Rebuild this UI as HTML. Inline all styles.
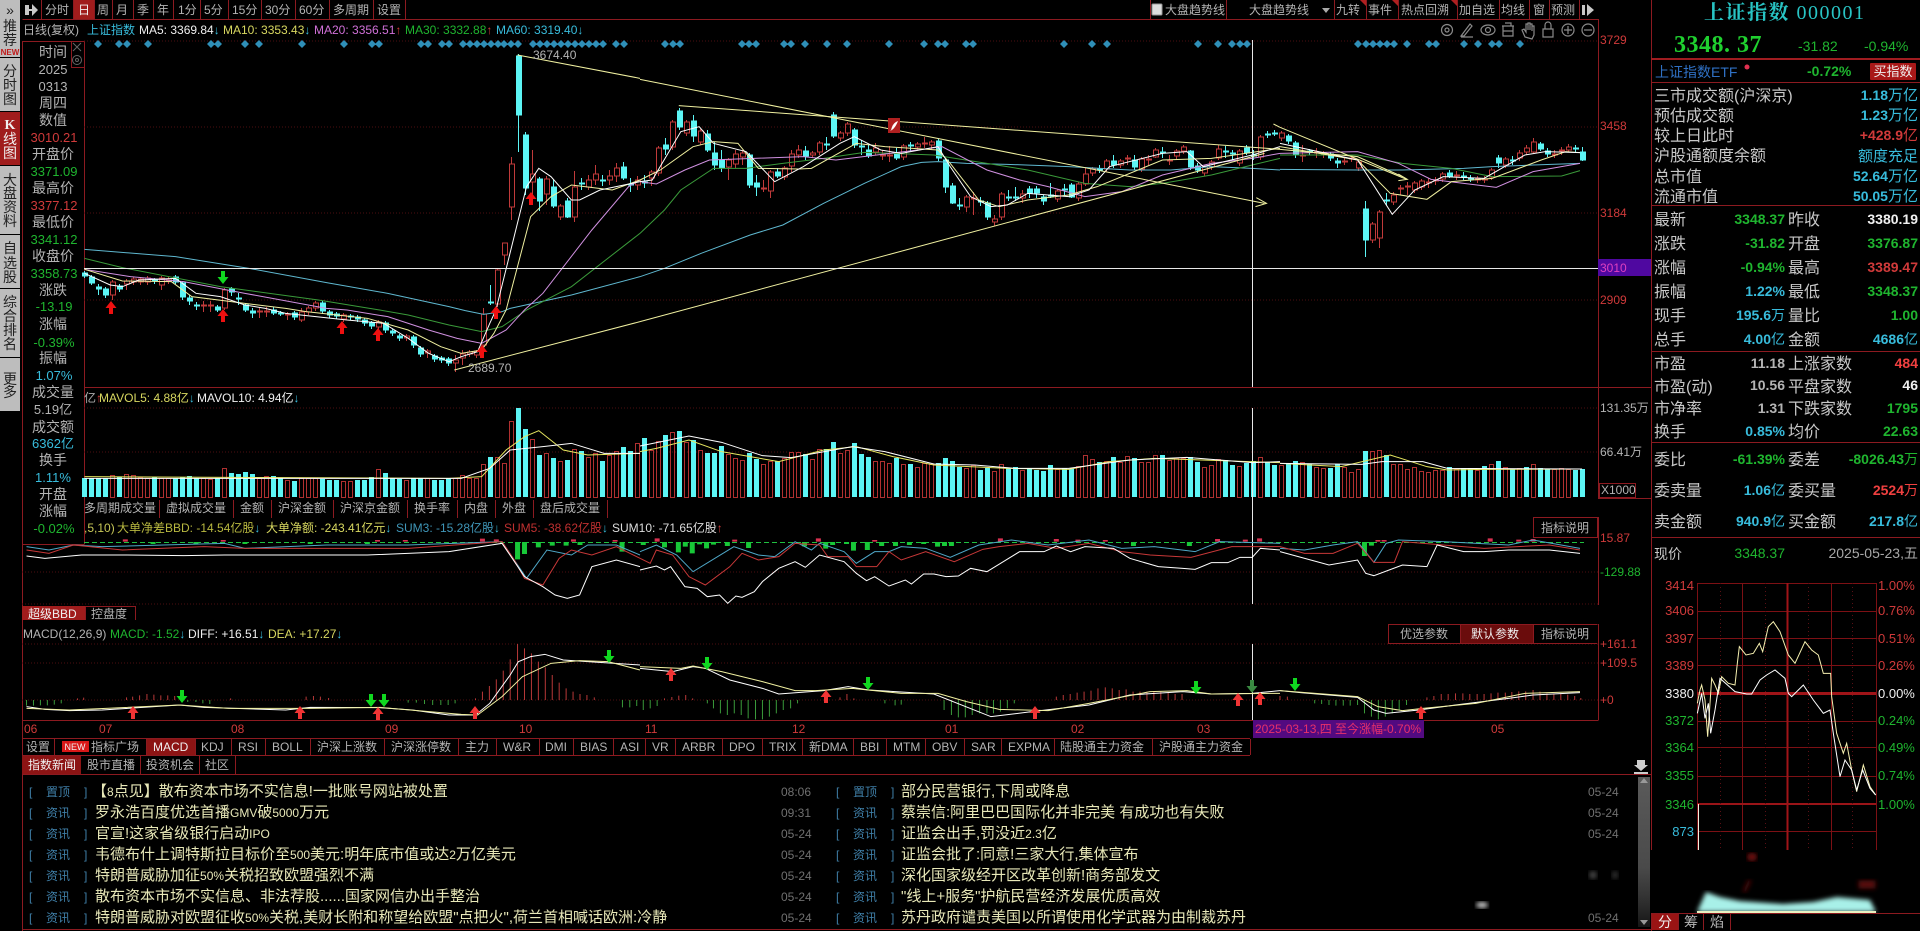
<!DOCTYPE html>
<html lang="zh">
<head>
<meta charset="utf-8">
<title>上证指数 000001</title>
<style>
html,body{margin:0;padding:0;background:#000;width:1920px;height:931px;overflow:hidden}
svg{display:block;font-family:"Liberation Sans","Noto Sans CJK SC",sans-serif;font-size:12px;fill:#b4b4b4}
.g{fill:#1fb52f}.r{fill:#d03a3a}.c{fill:#38bcdc}.y{fill:#d8d860}.w{fill:#f0f0f0}.m{fill:#d070d8}.d{fill:#222}
.k{fill:#c8c8c8;font-size:16px}
.v{font-size:14px;font-weight:bold}
.e{text-anchor:end}.t{text-anchor:middle}
.z *{fill:none;vector-effect:non-scaling-stroke}
.z .s5{stroke-width:5px}
.n{font-size:15px;fill:#e8e8b8}
.l{stroke:#8c1a20;stroke-width:1;fill:none}
.h{stroke:#4c0e10;stroke-width:1;stroke-dasharray:1 2;fill:none}
</style>
</head>
<body>
<svg xmlns="http://www.w3.org/2000/svg" width="1920" height="931" viewBox="0 0 1920 931">
<defs>
<path id="up" d="M0-7 5.500 0H2V6H-2V0H-5.500Z"/>
<path id="dn" d="M0 7-5.500 0H-2V-6H2V0H5.500Z"/>
<filter id="bl"><feGaussianBlur stdDeviation="2.500"/></filter>
</defs>
<rect width="1920" height="931" fill="#000"/>

<!-- left rail -->
<g fill="#bdbdbd" style="fill:#bdbdbd">
<rect width="20" height="57" fill="#bdbdbd"/><rect y="58" width="20" height="53" fill="#bdbdbd"/>
<rect y="112" width="20" height="53" fill="#a01c1c"/><rect y="166" width="20" height="68" fill="#bdbdbd"/>
<rect y="235" width="20" height="53" fill="#bdbdbd"/><rect y="289" width="20" height="68" fill="#bdbdbd"/>
<rect y="358" width="20" height="53" fill="#bdbdbd"/>
</g>
<g class="d t" font-size="14" style="font-size:14px">
<text x="10" y="15">»</text><text x="10" y="31">推</text><text x="10" y="45">荐</text>
<text x="10" y="76">分</text><text x="10" y="90">时</text><text x="10" y="104">图</text>
<text x="10" y="185">大</text><text x="10" y="198">盘</text><text x="10" y="212">资</text><text x="10" y="226">料</text>
<text x="10" y="253">自</text><text x="10" y="268">选</text><text x="10" y="282">股</text>
<text x="10" y="307">综</text><text x="10" y="321">合</text><text x="10" y="335">排</text><text x="10" y="349">名</text>
<text x="10" y="384">更</text><text x="10" y="397">多</text>
</g>
<text x="10" y="55" class="t" style="font-size:8px;font-weight:bold;fill:#c01818">NEW</text>
<g class="w t" style="font-size:14px">
<text x="10" y="129" style="font-family:'Liberation Serif',serif;font-weight:bold">K</text><text x="10" y="144">线</text><text x="10" y="158">图</text>
</g>

<!-- structural lines -->
<rect x="73" y="0" width="21" height="19" fill="#a01c1c"/>
<path class="l" d="M22.500 19.500H1598.500M1651.500 0V931M1598.500 19V498M1598.500 517V605M1598.500 624V720.500M22.500 41V931M84.500 41V544M22 544.500H84.500M84 387.500H1651M1598 498.500H1651M22 720.500H1598M22 738.500H1250M22 755.500H1250M22 774.500H1651M22 929.500H1651M22 41.500H84M71.500 41V67M71 67.500H84"/>
<path class="l" d="M41.500 0V19M73.500 0V19M94.500 0V19M112.500 0V19M133.500 0V19M153.500 0V19M173.500 0V19M200.500 0V19M228.500 0V19M261.500 0V19M295.500 0V19M329.500 0V19M373.500 0V19M405.500 0V19M1150.500 0V19M1226.500 0V19M1334.500 0V19M1366.500 0V19M1398.500 0V19M1457.500 0V19M1499.500 0V19M1529.500 0V19M1549.500 0V19M1579.500 0V19"/>
<path class="h" d="M84 41H1598M84 127H1598M84 213H1598M84 300H1598M84 408H1598M84 452H1598M22 572H1598M22 604H1598M22 644H1598M22 663H1598M22 700H1598"/>

<!-- top tabs -->
<path d="M25 5h4v4h3V4l6 6-6 6v-5h-3v4h-4zM1582 5h3v10h-3zM1587 4l7 6-7 6z" fill="#c8c8c8" style="fill:#c8c8c8"/>
<text x="45" y="14">分时</text><text x="78" y="14" class="w">日</text><text x="97" y="14">周</text><text x="116" y="14">月</text><text x="137" y="14">季</text><text x="157" y="14">年</text><text x="178" y="14">1分</text><text x="204" y="14">5分</text><text x="232" y="14">15分</text><text x="265" y="14">30分</text><text x="299" y="14">60分</text><text x="333" y="14">多周期</text><text x="377" y="14">设置</text>
<rect x="1152" y="4" width="10" height="11" rx="1" fill="#ddd" stroke="#999"/>
<text x="1165" y="14">大盘趋势线</text><text x="1249" y="14">大盘趋势线</text>
<path d="M1322 8h8l-4 5z" fill="#aaa" style="fill:#aaa"/>
<text x="1336" y="14">九转</text><text x="1368" y="14">事件</text><text x="1401" y="14">热点回溯</text><text x="1459" y="14">加自选</text><text x="1501" y="14">均线</text><text x="1533" y="14">窗</text><text x="1551" y="14">预测</text>
<path d="M1360 0h6v6zM1392 0h6v6zM1451 0h6v6z" style="fill:#b02020"/>

<!-- MA header -->
<text x="23" y="34">日线(复权)</text><text x="87" y="34" class="c">上证指数</text>
<text x="139" y="34" class="w">MA5: 3369.84<tspan class="c">↓</tspan></text>
<text x="223" y="34" class="y">MA10: 3353.43<tspan class="c">↓</tspan></text>
<text x="314" y="34" class="m">MA20: 3356.51<tspan class="r">↑</tspan></text>
<text x="405" y="34" class="g">MA30: 3332.88<tspan class="r">↑</tspan></text>
<text x="496" y="34" class="c">MA60: 3319.40<tspan class="c">↓</tspan></text>

<!-- chart icons -->
<g style="fill:none;stroke:#8a8a8a;stroke-width:1.200" fill="none" stroke="#8a8a8a">
<circle cx="1447" cy="30" r="5.500"/><circle cx="1447" cy="30" r="2"/>
<path d="M1461 36l9-12 2 2-8 10zM1461 37h12"/>
<ellipse cx="1488" cy="30" rx="7" ry="5"/><circle cx="1488" cy="30" r="2.500"/>
<path d="M1502 26h12M1505 23h6v3M1503 26v10h10V26M1503 31h10"/>
<path d="M1525 37l-3-7 2-1 2 3v-8h2v6-7h2v7-6h2v7-5h2v9l-2 4z"/>
<path d="M1543 29h10v8h-10zM1545 29v-4a3 3 0 0 1 6 0v4"/>
<circle cx="1568" cy="30" r="6"/><path d="M1564 30h8M1568 26v8"/>
<circle cx="1588" cy="30" r="6"/><path d="M1584 30h8"/>
</g>

<!-- axis main -->
<rect x="1598" y="259" width="53" height="17" fill="#4f08a0"/>
<g class="r"><text x="1600" y="44">3729</text><text x="1600" y="130">3458</text><text x="1600" y="217">3184</text><text x="1600" y="304">2909</text></g>
<text x="1600" y="272" style="fill:#e040c0">3010</text>
<text x="1600" y="412">131.35万</text><text x="1600" y="456">66.41万</text>
<rect x="1599.500" y="483.500" width="36" height="14" fill="none" stroke="#8c1a20"/><text x="1601" y="494">X1000</text>
<text x="1600" y="542" class="r">15.87</text><text x="1600" y="576" class="g">-129.88</text>
<g class="r"><text x="1600" y="648">+161.1</text><text x="1600" y="667">+109.5</text><text x="1600" y="704">+0</text></g>

<!-- left info panel -->
<g class="t" style="font-size:14px">
<text x="53" y="57">时间</text><text x="53" y="74" style="font-size:13px">2025</text><text x="53" y="91" style="font-size:13px">0313</text><text x="53" y="108">周四</text><text x="53" y="125">数值</text>
<text x="54" y="142" class="r" style="font-size:13px">3010.21</text><text x="53" y="159">开盘价</text>
<text x="54" y="176" class="g" style="font-size:13px">3371.09</text><text x="53" y="193">最高价</text>
<text x="54" y="210" class="r" style="font-size:13px">3377.12</text><text x="53" y="227">最低价</text>
<text x="54" y="244" class="g" style="font-size:13px">3341.12</text><text x="53" y="261">收盘价</text>
<text x="54" y="278" class="g" style="font-size:13px">3358.73</text><text x="53" y="295">涨跌</text>
<text x="54" y="311" class="g" style="font-size:13px">-13.19</text><text x="53" y="329">涨幅</text>
<text x="54" y="347" class="g" style="font-size:13px">-0.39%</text><text x="53" y="363">振幅</text>
<text x="54" y="380" class="c" style="font-size:13px">1.07%</text><text x="53" y="397">成交量</text>
<text x="53" y="414" style="font-size:13px">5.19亿</text><text x="53" y="432">成交额</text>
<text x="53" y="448" class="c" style="font-size:13px">6362亿</text><text x="53" y="465">换手</text>
<text x="53" y="482" class="c" style="font-size:13px">1.11%</text><text x="53" y="499">开盘</text>
<text x="53" y="516">涨幅</text><text x="54" y="533" class="g" style="font-size:13px">-0.02%</text>
</g>
<path d="M73 43l8 8M81 43l-8 8" stroke="#666" fill="none"/><circle cx="77" cy="60" r="4.500" fill="none" stroke="#666"/><circle cx="77" cy="60" r="1.500" fill="none" stroke="#666"/>

<!-- candles, bars, diamonds -->
<path id="dia" fill="#2f8fb8" style="fill:#2f8fb8"/>
<path id="cc" style="fill:#5cf5f5;stroke:#5cf5f5;stroke-width:1"/>
<path id="cr" style="fill:none;stroke:#c03a3a;stroke-width:1"/>
<path id="vc" style="fill:#5cf5f5"/>
<path id="vr" style="fill:none;stroke:#b03030;stroke-width:1"/>

<!-- MA lines main -->
<g class="z" transform="scale(.40816 .33333)" stroke-width="1">
<polyline stroke="#5fb8d0" points="207,748 430,770 610,805 800,848 950,880 1100,920 1140,932 1185,943 1230,935 1250,925 1400,885 1568,830"/>
<polyline stroke="#3a9a3a" points="207,775 300,803 540,860 780,900 930,930 1000,945 1100,975 1180,995 1230,980 1290,930 1400,860 1568,700"/>
<polyline stroke="#d090e0" points="207,808 320,830 450,845 600,880 800,925 850,930 950,950 1050,990 1120,1015 1180,1030 1240,990 1285,930 1330,880 1450,690 1540,560 1568,540"/>
<polyline stroke="#f0f0a0" points="207,808 300,843 420,845 470,890 600,910 700,925 750,935 900,955 1000,990 1080,1040 1130,1060 1180,1050 1210,1000 1240,930 1300,650 1350,590 1400,555 1500,570 1568,540"/>
<polyline stroke="#ffffff" points="207,820 270,855 300,860 340,840 430,835 480,880 540,890 600,915 650,925 700,940 850,960 940,970 1000,1015 1050,1060 1100,1085 1130,1070 1170,1055 1200,970 1215,930 1290,560 1320,505 1350,530 1400,600 1420,600 1470,570 1568,545"/>
<polyline stroke="#f0f0a0" points="1268,165 1568,235"/>
<polyline stroke="#f0f0a0" points="1113,1110 1568,965"/>
</g>
<g class="z" transform="translate(640 0) scale(.40816 .33333)">
<polyline stroke="#5fb8d0" points="0,830 60,805 150,760 270,705 350,675 450,610 550,550 640,500 690,487 730,485 800,490 900,493 1050,500 1200,510 1300,510 1400,500 1500,505 1568,510"/>
<polyline stroke="#3a9a3a" points="0,700 60,630 100,570 180,505 260,505 350,490 450,475 550,457 720,465 850,490 950,510 1090,550 1200,560 1280,550 1400,525 1500,495 1568,475"/>
<polyline stroke="#d090e0" points="0,545 40,552 110,510 170,480 280,475 400,470 480,480 560,468 680,450 740,440 850,510 930,540 1000,560 1090,590 1180,575 1280,525 1400,490 1500,475 1568,460"/>
<polyline stroke="#f0f0a0" points="0,540 50,510 130,440 180,425 240,430 290,505 390,507 420,505 530,430 600,440 730,450 760,490 830,600 880,620 950,600 1050,585 1120,560 1280,480 1400,475 1568,445"/>
<polyline stroke="#ffffff" points="0,545 30,540 100,395 145,380 180,430 260,455 330,545 400,500 490,430 525,410 590,450 640,460 730,440 760,500 810,590 860,620 900,615 950,580 1050,590 1100,570 1150,500 1280,460 1340,455 1380,500 1500,465 1568,440"/>
<polyline stroke="#f0f0a0" points="0,238 1530,610"/><polyline stroke="#f0f0a0" points="1510,593 1535,610 1508,620"/>
<polyline stroke="#f0f0a0" points="95,317 1568,448"/>
<polyline stroke="#f0f0a0" points="0,965 1530,460"/>
<polyline stroke="#f0f0a0" points="1552,372 1568,382"/>
</g>
<g class="z" transform="translate(1280 0) scale(.40816 .33333)">
<polyline stroke="#5fb8d0" points="0,508 190,510 300,510 450,505 520,500 620,495 735,490"/>
<polyline stroke="#3a9a3a" points="0,465 190,465 300,490 420,505 520,530 690,528 735,512"/>
<polyline stroke="#d090e0" points="0,460 190,455 290,490 370,538 450,550 530,562 620,515 735,490"/>
<polyline stroke="#f0f0a0" points="0,440 190,480 270,580 360,598 420,545 520,535 640,480 700,455 735,458"/>
<polyline stroke="#ffffff" points="0,430 190,480 275,643 330,570 400,530 500,535 600,465 650,455 735,458"/>
<polyline stroke="#f0f0a0" points="0,382 310,538"/><polyline stroke="#f0f0a0" points="290,522 312,538 290,542"/>
<polyline stroke="#f0f0a0" points="0,448 190,470 300,530"/>
</g>

<!-- labels on main -->
<text x="533" y="59">3674.40</text><text x="468" y="372">2689.70</text>
<rect x="888" y="118" width="12" height="15" fill="#b02020"/><path d="M890 131q5-2 8-10q-6 2-7 10" fill="#fff" style="fill:#fff"/>

<!-- white cross -->
<path d="M84 268.500H1598" stroke="#e8e8e8" fill="none"/>
<path d="M1252.500 40V387M1252.500 408V604M1252.500 644V720" stroke="#e8e8e8" fill="none"/>

<!-- arrows main -->
<g fill="#ee1010" style="fill:#ee1010">
<use href="#up" x="111" y="308"/><use href="#up" x="223" y="316"/><use href="#up" x="342" y="328"/><use href="#up" x="378" y="335"/><use href="#up" x="482" y="352"/><use href="#up" x="496" y="313"/><use href="#up" x="531" y="199"/>
</g>
<use href="#dn" x="223" y="277" style="fill:#10d820"/>

<!-- volume header -->
<text x="84" y="402" style="fill:#aaa">亿<tspan class="r">↑</tspan></text>
<text x="99" y="402" class="y">MAVOL5: 4.88亿<tspan class="c">↓</tspan></text>
<text x="197" y="402" class="w">MAVOL10: 4.94亿<tspan class="c">↓</tspan></text>
<g class="z" transform="translate(0 310) scale(.40816 .33333)">
<polyline stroke="#e8e860" points="207,500 1100,505 1180,500 1240,420 1285,380 1320,362 1380,420 1440,435 1568,430"/>
<polyline stroke="#ffffff" points="207,505 1130,505 1200,475 1250,420 1330,410 1400,400 1480,430 1568,430"/>
</g>
<g class="z" transform="translate(640 310) scale(.40816 .33333)">
<polyline stroke="#e8e860" points="0,425 40,415 120,390 200,425 270,440 340,455 450,420 530,410 620,440 720,465 900,475 1050,478 1150,455 1260,445 1568,458"/>
<polyline stroke="#ffffff" points="0,408 120,378 200,397 300,437 370,443 520,410 600,425 720,462 820,465 920,475 1050,475 1200,450 1340,442 1500,458 1568,455"/>
</g>
<g class="z" transform="translate(1280 310) scale(.40816 .33333)">
<polyline stroke="#e8e860" points="0,460 150,470 270,435 360,470 410,480 500,478 740,477"/>
<polyline stroke="#ffffff" points="0,460 200,463 250,455 350,455 410,475 740,477"/>
</g>

<!-- vol tabs -->
<path class="l" d="M159.500 500V518M233.500 500V518M271.500 500V518M333.500 500V518M407.500 500V518M457.500 500V518M495.500 500V518M533.500 500V518M607.500 500V518"/>
<text x="84" y="512">多周期成交量</text><text x="166" y="512">虚拟成交量</text><text x="240" y="512">金额</text><text x="278" y="512">沪深金额</text><text x="340" y="512">沪深京金额</text><text x="414" y="512">换手率</text><text x="464" y="512">内盘</text><text x="502" y="512">外盘</text><text x="540" y="512">盘后成交量</text>

<!-- BBD header -->
<text x="84" y="532" style="fill:#c8c858">,5,10)</text>
<text x="117" y="532" style="fill:#b8b840">大单净差BBD: -14.54亿股<tspan class="c">↓</tspan></text>
<text x="266" y="532" class="y">大单净额: -243.41亿元<tspan class="c">↓</tspan></text>
<text x="396" y="532" style="fill:#3f96b8">SUM3: -15.28亿股<tspan class="c">↓</tspan></text>
<text x="504" y="532" style="fill:#c03030">SUM5: -38.62亿股<tspan class="c">↓</tspan></text>
<text x="612" y="532" style="fill:#ddd">SUM10: -71.65亿股<tspan class="r">↑</tspan></text>
<rect x="1533.500" y="517.500" width="64" height="20" fill="#000" stroke="#8c1a20"/>
<text x="1541" y="532">指标说明</text>

<path d="M84 542.500H1584" stroke="#20c040" stroke-dasharray="5 3" fill="none"/>
<g class="z" transform="translate(0 310) scale(.40816 .33333)">
<path class="s5" stroke="#18c838" stroke-width="5" d="M1268 696V748M1285 696V732M1319 696V712M1353 696V707M1387 696V707M1421 696V705M1524 696V725M375 696V702M600 696V702M480 696V702M760 696V702M900 696V702"/>
<path class="s5" stroke="#d83050" stroke-width="5" d="M307 688V695M547 690V695M925 690V695M993 690V695M1182 686V695M1216 688V695M1405 688V695M1507 690V695"/>
<polyline stroke="#4fa8c8" points="65,710 120,720 180,705 250,710 400,705 550,700 600,715 800,705 1000,705 1230,695 1260,750 1290,805 1340,720 1400,735 1440,705 1510,705 1568,735"/>
<polyline stroke="#c83838" points="65,720 120,730 180,705 300,720 500,710 600,715 800,715 1000,715 1230,695 1260,750 1285,805 1330,825 1370,745 1400,720 1450,735 1510,710 1568,745"/>
<polyline stroke="#ffffff" points="65,738 110,745 200,735 300,735 450,737 550,735 720,735 900,735 1100,725 1230,700 1255,745 1285,800 1330,830 1360,855 1390,865 1420,855 1450,770 1510,750 1568,770"/>
</g>
<g class="z" transform="translate(640 310) scale(.40816 .33333)">
<path stroke="#18c838" stroke-width="5" class="s5" d="M8 696V705M60 696V712M94 696V727M111 696V710M128 696V730M146 696V703M163 696V715M180 696V704M214 696V708M266 696V714M403 696V709M455 696V716M472 696V705M506 696V702M523 696V722M557 696V720M592 696V708M626 696V708M660 696V705M695 696V702M729 696V710M746 696V708M763 696V708M1209 696V708M1346 696V708"/>
<path stroke="#d83050" stroke-width="5" class="s5" d="M42 685V695M232 689V695M437 685V695M575 690V695M883 685V695M1020 687V695M1073 689V695M1140 690V695M1415 687V695M1483 689V695M1518 685V695"/>
<polyline stroke="#4fa8c8" points="0,725 40,705 90,735 130,785 210,725 230,710 290,735 330,740 380,695 420,720 440,700 500,725 530,760 575,725 610,725 640,710 700,715 760,742 830,705 910,690 1000,705 1100,690 1180,715 1260,710 1360,725 1420,695 1568,700"/>
<polyline stroke="#c83838" points="0,745 25,760 40,720 80,735 120,800 160,825 220,770 250,730 290,750 340,740 380,700 440,705 460,740 510,740 530,770 580,770 610,725 640,750 700,725 770,755 840,718 880,710 950,700 1020,715 1100,700 1180,725 1250,735 1350,742 1450,710 1568,710"/>
<polyline stroke="#ffffff" points="0,780 40,768 60,780 75,770 110,830 140,835 165,860 195,855 215,880 235,858 250,862 280,845 300,815 340,775 380,755 405,772 440,735 500,755 530,790 555,812 575,800 610,828 650,810 665,822 695,792 720,792 750,800 780,798 810,775 850,785 890,755 930,725 990,725 1020,708 1055,725 1090,710 1160,715 1200,745 1270,770 1330,775 1360,778 1400,758 1440,758 1470,742 1500,742 1520,715 1568,720"/>
</g>
<g class="z" transform="translate(1280 310) scale(.40816 .33333)">
<path stroke="#18c838" stroke-width="5" class="s5" d="M207 696V738M224 696V707"/>
<path stroke="#d83050" stroke-width="5" class="s5" d="M240 690V695M255 690V695M515 685V695M585 689V695M620 687V695"/>
<polyline stroke="#4fa8c8" points="0,715 60,720 130,705 190,695 230,757 260,700 290,690 400,695 560,705 620,690 735,715"/>
<polyline stroke="#c83838" points="0,710 60,730 130,730 190,700 230,757 280,757 300,695 400,705 500,715 660,705 735,720"/>
<polyline stroke="#ffffff" points="0,725 120,765 190,750 210,790 230,797 300,765 360,770 385,705 450,725 500,725 560,720 660,720 735,730"/>
</g>

<!-- 超级BBD tabs -->
<rect x="22" y="606" width="63" height="14" fill="#a01c1c"/>
<path class="l" d="M85.500 606V620M135.500 606V620M85 606.500H135"/>
<text x="28" y="618" class="w">超级BBD</text><text x="91" y="618">控盘度</text>

<!-- MACD header -->
<text x="23" y="638">MACD(12,26,9)</text>
<text x="110" y="638" class="g">MACD: -1.52<tspan class="c">↓</tspan></text>
<text x="188" y="638" class="w">DIFF: +16.51<tspan class="c">↓</tspan></text>
<text x="268" y="638" class="y">DEA: +17.27<tspan class="c">↓</tspan></text>
<rect x="1460" y="624" width="73" height="19" fill="#6a0c0c"/>
<path class="l" d="M1388.500 624.500H1597.500M1388.500 624V643M1388 643.500H1597M1460.500 624V643M1533.500 624V643"/>
<text x="1400" y="638">优选参数</text><text x="1471" y="638" class="w">默认参数</text><text x="1541" y="638">指标说明</text>

<!-- MACD -->
<g class="z" transform="translate(0 620) scale(.40816 .33333)">
<path stroke="#b83838" d="M1182 240V215M1199 240V198M1216 240V178M1233 240V152M1250 240V118M1268 240V72M1285 240V85M1302 240V100M1319 240V125M1336 240V142M1353 240V165M1370 240V188M1387 240V205M1404 240V215M1421 240V222M1438 240V225M1456 240V232M190 240V235M205 240V233M310 240V232M325 240V230M342 240V226M360 240V222M377 240V224M394 240V226M411 240V226M428 240V228M565 240V235M750 240V230M768 240V228M785 240V230M805 240V234M1165 240V235"/>
<path stroke="#3a9a3a" d="M65 240V257M82 240V257M99 240V256M116 240V256M133 240V254M150 240V250M460 240V246M480 240V246M497 240V250M514 240V252M1000 240V248M1020 240V248M1040 240V252M1060 240V255M1080 240V255M1098 240V255M1115 240V250M1525 240V262M1543 240V262M1560 240V258"/>
<polyline stroke="#ffffff" points="65,260 110,268 170,272 250,270 440,255 500,262 700,270 760,262 930,263 1010,270 1100,285 1165,285 1200,250 1250,165 1270,125 1300,110 1335,103 1380,120 1440,125 1568,135"/>
<polyline stroke="#f0f0a0" points="65,265 170,270 440,255 560,265 760,265 930,262 1130,283 1170,285 1230,230 1280,170 1350,130 1420,122 1490,125 1568,150"/>
</g>
<g class="z" transform="translate(640 620) scale(.40816 .33333)">
<path stroke="#b83838" d="M60 240V235M78 240V231M95 240V227M112 240V225M129 240V235M490 240V232M507 240V222M524 240V235M1020 240V230M1037 240V225M1054 240V222M1071 240V218M1088 240V215M1105 240V212M1122 240V205M1140 240V202M1157 240V205M1174 240V210M1191 240V208M1208 240V215M1225 240V215M1242 240V215M1259 240V215M1276 240V215M1294 240V218M1311 240V222M1328 240V222"/>
<path stroke="#3a9a3a" d="M8 240V270M25 240V265M42 240V258M165 240V250M180 240V265M197 240V280M214 240V285M231 240V280M248 240V285M265 240V295M283 240V298M300 240V298M317 240V290M334 240V280M351 240V270M369 240V265M386 240V250M600 240V250M625 240V256M640 240V254M745 240V270M763 240V285M780 240V292M797 240V292M814 240V285M832 240V280M850 240V280M866 240V280M883 240V275M900 240V265M917 240V250"/>
<polyline stroke="#ffffff" points="0,145 80,155 130,140 160,145 220,180 300,205 340,222 450,212 510,200 560,210 720,222 860,290 960,275 1100,255 1200,225 1330,215 1400,222 1500,220 1568,212"/>
<polyline stroke="#f0f0a0" points="0,140 100,145 130,138 200,155 300,185 380,212 430,212 520,205 640,220 730,220 800,245 880,268 1000,272 1100,250 1250,215 1340,212 1400,222 1568,220"/>
</g>
<g class="z" transform="translate(1280 620) scale(.40816 .33333)">
<path stroke="#b83838" d="M360 240V232M377 240V228M395 240V222M412 240V222M430 240V220M448 240V220M465 240V222M483 240V222M500 240V222M517 240V220M534 240V218M552 240V218M568 240V216M585 240V214M602 240V214M620 240V210M637 240V215M654 240V220M671 240V222M688 240V222M705 240V224M722 240V228M737 240V234M0 240V228M18 240V230"/>
<path stroke="#3a9a3a" d="M85 240V250M102 240V252M120 240V255M137 240V257M155 240V257M172 240V257M190 240V255M207 240V280M224 240V290M241 240V298M258 240V290M275 240V280M292 240V270M310 240V255"/>
<polyline stroke="#ffffff" points="0,212 50,218 120,225 190,232 230,270 260,280 340,270 430,255 560,235 620,225 735,218"/>
<polyline stroke="#f0f0a0" points="0,212 190,230 240,260 300,272 350,265 480,250 600,220 735,215"/>
</g>
<g style="fill:#f03434">
<use href="#up" x="133" y="713"/><use href="#up" x="300" y="713"/><use href="#up" x="378" y="714"/><use href="#up" x="475" y="713"/><use href="#up" x="671" y="675"/><use href="#up" x="826" y="697"/><use href="#up" x="1035" y="713"/><use href="#up" x="1238" y="700"/><use href="#up" x="1260" y="699"/><use href="#up" x="1421" y="713"/>
</g>
<g style="fill:#10d820">
<use href="#dn" x="182" y="696"/><use href="#dn" x="371" y="700"/><use href="#dn" x="384" y="700"/><use href="#dn" x="609" y="656"/><use href="#dn" x="707" y="663"/><use href="#dn" x="868" y="683"/><use href="#dn" x="1196" y="687"/><use href="#dn" x="1295" y="684"/>
</g>
<use href="#dn" x="1252" y="686" style="fill:#3a8a42"/>

<!-- date axis -->
<g class="r"><text x="24" y="733">06</text><text x="99" y="733">07</text><text x="231" y="733">08</text><text x="385" y="733">09</text><text x="519" y="733">10</text><text x="645" y="733">11</text><text x="792" y="733">12</text><text x="945" y="733">01</text><text x="1071" y="733">02</text><text x="1197" y="733">03</text><text x="1491" y="733">05</text></g>
<rect x="1253" y="720" width="171" height="18" fill="#520a80"/>
<text x="1255" y="733" style="fill:#e8306a">2025-03-13,四 至今涨幅-0.70%</text>

<!-- indicator tabs -->
<rect x="146" y="739" width="49" height="16" fill="#8c1414"/>
<rect x="62" y="741" width="27" height="11" fill="#d81818"/>
<text x="75" y="750" class="t w" style="font-size:9px">NEW</text>
<path class="l" d="M54.500 739V755M146.500 739V755M195.500 739V755M231.500 739V755M265.500 739V755M310.500 739V755M384.500 739V755M458.500 739V755M496.500 739V755M539.500 739V755M573.500 739V755M613.500 739V755M645.500 739V755M675.500 739V755M722.500 739V755M762.500 739V755M802.500 739V755M853.500 739V755M886.500 739V755M925.500 739V755M964.500 739V755M1001.500 739V755M1054.500 739V755M1152.500 739V755M1250.500 739V755"/>
<text x="26" y="751">设置</text><text x="91" y="751">指标广场</text><text x="153" y="751" class="w">MACD</text><text x="201" y="751">KDJ</text><text x="238" y="751">RSI</text><text x="272" y="751">BOLL</text><text x="317" y="751">沪深上涨数</text><text x="391" y="751">沪深涨停数</text><text x="465" y="751">主力</text><text x="503" y="751">W&amp;R</text><text x="545" y="751">DMI</text><text x="580" y="751">BIAS</text><text x="620" y="751">ASI</text><text x="652" y="751">VR</text><text x="682" y="751">ARBR</text><text x="729" y="751">DPO</text><text x="769" y="751">TRIX</text><text x="809" y="751">新DMA</text><text x="860" y="751">BBI</text><text x="893" y="751">MTM</text><text x="932" y="751">OBV</text><text x="971" y="751">SAR</text><text x="1008" y="751">EXPMA</text><text x="1060" y="751">陆股通主力资金</text><text x="1159" y="751">沪股通主力资金</text>

<!-- news tabs -->
<rect x="22" y="756" width="59" height="18" fill="#8c1414"/>
<path class="l" d="M140.500 756V774M199.500 756V774M235.500 756V774"/>
<text x="28" y="769" class="w">指数新闻</text><text x="87" y="769">股市直播</text><text x="146" y="769">投资机会</text><text x="205" y="769">社区</text>
<path d="M1637 760h8v5h3l-7 6-7-6h3zM1634 772h14v2h-14z" style="fill:#ccc"/>

<!-- news left -->
<g style="fill:#3f7fa8">
<text x="29" y="796">[</text><text x="29" y="817">[</text><text x="29" y="838">[</text><text x="29" y="859">[</text><text x="29" y="880">[</text><text x="29" y="901">[</text><text x="29" y="922">[</text>
<text x="84" y="796">]</text><text x="84" y="817">]</text><text x="84" y="838">]</text><text x="84" y="859">]</text><text x="84" y="880">]</text><text x="84" y="901">]</text><text x="84" y="922">]</text>
<text x="46" y="796">置顶</text><text x="46" y="817">资讯</text><text x="46" y="838">资讯</text><text x="46" y="859">资讯</text><text x="46" y="880">资讯</text><text x="46" y="901">资讯</text><text x="46" y="922">资讯</text>
<text x="836" y="796">[</text><text x="836" y="817">[</text><text x="836" y="838">[</text><text x="836" y="859">[</text><text x="836" y="880">[</text><text x="836" y="901">[</text><text x="836" y="922">[</text>
<text x="891" y="796">]</text><text x="891" y="817">]</text><text x="891" y="838">]</text><text x="891" y="859">]</text><text x="891" y="880">]</text><text x="891" y="901">]</text><text x="891" y="922">]</text>
<text x="853" y="796">置顶</text><text x="853" y="817">资讯</text><text x="853" y="838">资讯</text><text x="853" y="859">资讯</text><text x="853" y="880">资讯</text><text x="853" y="901">资讯</text><text x="853" y="922">资讯</text>
</g>
<g class="n">
<text x="92" y="796">【<tspan font-size="12">8</tspan>点见】散布资本市场不实信息!一批账号网站被处置</text>
<text x="95" y="817">罗永浩百度优选首播<tspan font-size="12">GMV</tspan>破<tspan font-size="12">5000</tspan>万元</text>
<text x="95" y="838">官宣!这家省级银行启动<tspan font-size="12">IPO</tspan></text>
<text x="95" y="859">韦德布什上调特斯拉目标价至<tspan font-size="12">500</tspan>美元:明年底市值或达<tspan font-size="12">2</tspan>万亿美元</text>
<text x="95" y="880">特朗普威胁加征<tspan font-size="12">50%</tspan>关税招致欧盟强烈不满</text>
<text x="95" y="901">散布资本市场不实信息、非法荐股......国家网信办出手整治</text>
<text x="95" y="922">特朗普威胁对欧盟征收<tspan font-size="12">50%</tspan>关税,美财长附和称望给欧盟"点把火",荷兰首相喊话欧洲:冷静</text>
<text x="901" y="796">部分民营银行,下周或降息</text>
<text x="901" y="817">蔡崇信:阿里巴巴国际化并非完美 有成功也有失败</text>
<text x="901" y="838">证监会出手,罚没近<tspan font-size="12">2.3</tspan>亿</text>
<text x="901" y="859">证监会批了:同意!三家大行,集体宣布</text>
<text x="901" y="880">深化国家级经开区改革创新!商务部发文</text>
<text x="901" y="901">"线上+服务"护航民营经济发展优质高效</text>
<text x="901" y="922">苏丹政府谴责美国以所谓使用化学武器为由制裁苏丹</text>
</g>
<g style="fill:#707070">
<text x="781" y="796">08:06</text><text x="781" y="817">09:31</text><text x="781" y="838">05-24</text><text x="781" y="859">05-24</text><text x="781" y="880">05-24</text><text x="781" y="901">05-24</text><text x="781" y="922">05-24</text>
<text x="1588" y="796">05-24</text><text x="1588" y="817">05-24</text><text x="1588" y="838">05-24</text><text x="1588" y="922">05-24</text>
</g>
<ellipse cx="1482" cy="905" rx="6" ry="3" style="fill:#ccc" filter="url(#bl)"/>
<ellipse cx="1593" cy="875" rx="4" ry="4" style="fill:#444" filter="url(#bl)"/>
<ellipse cx="1615" cy="875" rx="3" ry="4" style="fill:#333" filter="url(#bl)"/>

<!-- scrollbar -->
<defs><linearGradient id="sb" x1="0" y1="0" x2="0" y2="1"><stop offset="0" stop-color="#5a5a5a"/><stop offset=".6" stop-color="#4a4a4a"/><stop offset=".8" stop-color="#333"/><stop offset="1" stop-color="#161616"/></linearGradient></defs>
<rect x="1638" y="777" width="12" height="150" style="fill:url(#sb)"/>
<path d="M1640 783l4-5 4 5zM1640 920l4 5 4-5z" style="fill:#999"/>

<!-- right panel top -->
<text x="1704" y="19" style="font-family:'Liberation Serif','Noto Serif CJK SC',serif;font-size:20px;fill:#28c4c4;letter-spacing:1.500px;font-weight:bold">上证指数 <tspan style="font-weight:normal">000001</tspan></text>
<text x="1674" y="52" style="font-family:'Liberation Serif',serif;font-size:24px;fill:#1fd02f;letter-spacing:.5px;font-weight:bold">3348. 37</text>
<text x="1798" y="51" class="g" style="font-size:14px">-31.82</text><text x="1864" y="51" class="g" style="font-size:14px">-0.94%</text>
<path d="M1651 59H1920" stroke="#a01c20" stroke-width="2" fill="none"/>
<text x="1655" y="77" style="font-size:14px;fill:#2f70c4">上证指数ETF</text>
<circle cx="1747" cy="67" r="2.500" style="fill:#e03050"/>
<text x="1807" y="76" class="g v">-0.72%</text>
<rect x="1870" y="63" width="46" height="17" rx="1" fill="#a81818"/>
<text x="1893" y="76" class="t w" style="font-size:13px">买指数</text>
<path class="l" d="M1651 82.500H1920M1651 205.500H1920M1651 351.500H1920M1651 442.500H1920M1651 537.500H1920"/>

<g class="k">
<text x="1654" y="101">三市成交额(沪深京)</text><text x="1654" y="121">预估成交额</text><text x="1654" y="141">较上日此时</text><text x="1654" y="161">沪股通额度余额</text><text x="1654" y="182">总市值</text><text x="1654" y="202">流通市值</text>
<text x="1654" y="225">最新</text><text x="1654" y="249">涨跌</text><text x="1654" y="273">涨幅</text><text x="1654" y="297">振幅</text><text x="1654" y="321">现手</text><text x="1654" y="345">总手</text>
<text x="1788" y="225">昨收</text><text x="1788" y="249">开盘</text><text x="1788" y="273">最高</text><text x="1788" y="297">最低</text><text x="1788" y="321">量比</text><text x="1788" y="345">金额</text>
<text x="1654" y="369">市盈</text><text x="1654" y="392">市盈(动)</text><text x="1654" y="414">市净率</text><text x="1654" y="437">换手</text>
<text x="1788" y="369">上涨家数</text><text x="1788" y="392">平盘家数</text><text x="1788" y="414">下跌家数</text><text x="1788" y="437">均价</text>
<text x="1654" y="465">委比</text><text x="1654" y="496">委卖量</text><text x="1654" y="527">卖金额</text>
<text x="1788" y="465">委差</text><text x="1788" y="496">委买量</text><text x="1788" y="527">买金额</text>
<text x="1654" y="559" style="font-size:14px">现价</text>
</g>
<g class="v e">
<text x="1918" y="100" class="c">1.18<tspan style="font-size:15px;font-weight:normal">万亿</tspan></text>
<text x="1918" y="120" class="c">1.23<tspan style="font-size:15px;font-weight:normal">万亿</tspan></text>
<text x="1918" y="140" class="r">+428.9<tspan style="font-size:15px;font-weight:normal">亿</tspan></text>
<text x="1918" y="161" class="c" style="font-size:15px;font-weight:normal">额度充足</text>
<text x="1918" y="181" class="c">52.64<tspan style="font-size:15px;font-weight:normal">万亿</tspan></text>
<text x="1918" y="201" class="c">50.05<tspan style="font-size:15px;font-weight:normal">万亿</tspan></text>
<text x="1785" y="224" class="g">3348.37</text><text x="1918" y="224" class="w">3380.19</text>
<text x="1785" y="248" class="g">-31.82</text><text x="1918" y="248" class="g">3376.87</text>
<text x="1785" y="272" class="g">-0.94%</text><text x="1918" y="272" class="r">3389.47</text>
<text x="1785" y="296" class="c">1.22%</text><text x="1918" y="296" class="g">3348.37</text>
<text x="1785" y="320" class="c">195.6<tspan style="font-weight:normal">万</tspan></text><text x="1918" y="320" class="g">1.00</text>
<text x="1785" y="344" class="c">4.00<tspan style="font-weight:normal">亿</tspan></text><text x="1918" y="344" class="c">4686<tspan style="font-weight:normal">亿</tspan></text>
<text x="1785" y="368">11.18</text><text x="1918" y="368" style="fill:#f04040">484</text>
<text x="1785" y="390">10.56</text><text x="1918" y="390" class="w">46</text>
<text x="1785" y="413">1.31</text><text x="1918" y="413" class="g">1795</text>
<text x="1785" y="436" class="c">0.85%</text><text x="1918" y="436" class="g">22.63</text>
<text x="1785" y="464" class="g">-61.39%</text><text x="1918" y="464" class="g">-8026.43<tspan style="font-weight:normal">万</tspan></text>
<text x="1785" y="495" class="c">1.06<tspan style="font-weight:normal">亿</tspan></text><text x="1918" y="495" style="fill:#f04040">2524<tspan style="font-weight:normal">万</tspan></text>
<text x="1785" y="526" class="c">940.9<tspan style="font-weight:normal">亿</tspan></text><text x="1918" y="526" class="c">217.8<tspan style="font-weight:normal">亿</tspan></text>
</g>
<text x="1785" y="558" class="e g" style="font-size:14px">3348.37</text>
<text x="1918" y="558" class="e" style="font-size:14px;fill:#a8a8a8">2025-05-23,五</text>

<!-- intraday -->
<path d="M1697 583.500H1876M1697 611.500H1876M1697 638.500H1876M1697 665.500H1876M1697 721.500H1876M1697 747.500H1876M1697 776.500H1876M1697 831.500H1876M1697.500 583V850M1742.500 583V850M1831.500 583V850M1876.500 583V850" stroke="#7c1014" fill="none"/>
<path d="M1787.500 583V850" stroke="#a01418" stroke-width="2" fill="none"/>
<path d="M1697 693.500H1876" stroke="#a01418" stroke-width="3" fill="none"/>
<path d="M1697 804H1876" stroke="#9a1418" stroke-width="2" fill="none"/>
<path d="M1720.500 583V850M1765.500 583V850M1808.500 583V850M1852.500 583V850" stroke="#5a1014" stroke-dasharray="1 3" fill="none"/>
<g class="e" style="font-size:13px">
<text x="1694" y="590" class="r">3414</text><text x="1694" y="615" class="r">3406</text><text x="1694" y="643" class="r">3397</text><text x="1694" y="670" class="r">3389</text><text x="1694" y="698" class="w">3380</text><text x="1694" y="725" class="g">3372</text><text x="1694" y="752" class="g">3364</text><text x="1694" y="780" class="g">3355</text><text x="1694" y="809" class="g">3346</text><text x="1694" y="836" class="c">873</text>
</g>
<g style="font-size:13px">
<text x="1878" y="590" class="r">1.00%</text><text x="1878" y="615" class="r">0.76%</text><text x="1878" y="643" class="r">0.51%</text><text x="1878" y="670" class="r">0.26%</text><text x="1878" y="698" class="w">0.00%</text><text x="1878" y="725" class="g">0.24%</text><text x="1878" y="752" class="g">0.49%</text><text x="1878" y="780" class="g">0.74%</text><text x="1878" y="809" class="g">1.00%</text>
</g>
<g class="z" transform="translate(1640 570) scale(.33333)">
<polyline stroke="#f6f0b0" points="172,400 180,360 185,345 195,390 203,500 208,430 215,325 225,345 235,370 245,320 265,340 285,345 292,280 298,230 318,255 340,250 358,220 368,245 385,170 400,155 420,185 445,255 465,280 495,215 515,240 535,255 550,310 572,310 575,380 590,490 600,520 610,550 620,520 635,600 650,665 670,585 690,650 707,675"/>
<polyline stroke="#ffffff" points="172,430 185,370 195,445 205,400 212,490 225,420 240,325 285,365 320,372 335,372 360,330 380,315 405,300 435,325 445,370 455,380 490,345 520,390 550,430 570,420 580,490 600,620 615,570 635,600 650,660 668,600 690,655 707,675"/>
</g>
<path d="M1698.500 804V850" stroke="#f0f0e0" fill="none"/>

<!-- blurred smudge area -->
<rect x="1651" y="850" width="269" height="63" fill="#000"/>
<ellipse cx="1752" cy="857" rx="5" ry="4" style="fill:#701010" filter="url(#bl)"/>
<path d="M1680 885H1720M1740 885H1830M1850 885H1875" stroke="#4a0c0c" stroke-width="2" filter="url(#bl)" fill="none"/>
<path d="M1750 880l-6 12M1860 882h14v5h-14z" stroke="#5a0e10" stroke-width="3" style="fill:#5a0e10" filter="url(#bl)"/>
<path d="M1697 912L1706 892 1720 897 1740 901 1783 904 1813 902 1837 897 1870 900 1876 912Z" style="fill:#a8f0e8" filter="url(#bl)"/>
<path d="M1697 912H1876" stroke="#e8f0c0" stroke-width="2" fill="none"/>

<!-- bottom tabs -->
<rect x="1652" y="914" width="26" height="16" fill="#9a1414"/>
<path class="l" d="M1651 913.500H1920M1678.500 914V930M1703.500 914V930M1730.500 914V930"/>
<g style="font-size:14px">
<text x="1658" y="927" class="w">分</text><text x="1684" y="927">筹</text><text x="1710" y="927">焰</text>
</g>
</svg>
<script>
(function(){
var $=function(i,d){document.getElementById(i).setAttribute('d',d)};
var D=[98,119,127,148,211,218,245,259,302,344,372,379,421,428,442,449,463,470,477,484,491,498,504,511,518,533,540,547,554,561,568,575,582,589,596,603,616,624,665,673,680,742,749,756,784,791,805,827,847,889,924,938,945,966,973,1064,1092,1107,1198,1218,1232,1240,1247,1358,1366,1373,1380,1387,1394,1407,1429,1436,1464,1478,1492,1499,1520],d='';
D.forEach(function(x){d+='M'+x+' 40l4 4-4 4-4-4z'});$('dia',d);
var C="c273,276,271,278 c277,283,275,285 c287,289,284,295 c289,295 r282,295,280,300 c286,289,284,292 r281,284,279,290 r279,282 r279,282 r278,282 c280,281 r278,285,276,290 r279,281 c277,282,275,284 c283,297 c298,301,295,305 c305,306,302,310 r305,306,301,312 r305,306,301,312 c307,310,305,312 r290,308,288,310 c289,292,287,296 c298,299,293,305 c305,310,303,312 c311,313,308,318 r311,312,308,318 r311,312,307,317 c310,313,307,315 c313,314,311,316 r314,315,312,320 c313,317 r312,320,308,322 r308,312 r303,308 c303,311 c312,315 c314,316 r315,319 c316,317 c317,319 c320,323 c323,326 r322,327 c323,330 c331,333 c336,338 r336,338 c337,345 c348,354 r351,353,349,358 c356,359 c358,360 c359,363 r360,363,355,372 r354,358,350,365 r352,354 r351,355,350,358 r314,345,308,350 c302,303,285,305 r270,304 r243,255,243,265 r164,207,157,220 c56,115,54,152 c135,188,132,195 r174,182,150,197 c179,201,177,211 r179,194,176,205 c187,206,180,208 r206,217 c201,217,198,218 r187,217,171,222 c183,184,178,190 r180,187,175,190 r174,180,165,185 c180,181,175,186 r176,180,170,185 r168,176,163,182 c167,178,162,180 c184,185,178,192 r180,185,176,190 c182,183,175,188 r172,178,170,186 r148,173 c145,149,138,155 r122,147 c111,127,108,130 r122,133 c121,136,115,142 r131,142 c134,150,130,152 c153,165,142,170 c160,168,150,172 r160,167,158,180 r154,164,150,168 r153,157,150,165 c155,185 c183,187,175,196 r188,189,180,192 r172,191,170,198 c172,176,168,178 r168,177 r154,166,150,172 r150,155,145,158 c151,156,146,160 r153,155 r143,152 c144,145,137,150 c115,136,112,138 r133,138 r124,133 c130,145 c146,147,140,155 c150,156,145,158 r148,152,143,155 r155,156,150,160 r155,156,146,162 c153,158,148,160 r146,157 c145,146,142,152 r144,147 r143,144,137,148 r142,145,140,150 c141,158 c160,187,158,193 c186,203,183,204 c205,206,198,210 r197,207,195,212 r198,199,192,215 c201,202,197,206 c203,217 r219,222,215,226 r194,217 c197,198,190,201 c197,198,187,201 r194,198,190,203 c189,193,186,198 c189,193,186,198 c197,201,195,205 c195,196,183,198 r191,199 c189,190,184,195 c185,197,183,198 r184,198 r174,184,168,186 r169,173 c169,170,165,173 r161,169 c161,165,155,168 r161,165 r158,159,155,165 c160,167,155,170 r159,169 r159,160,155,165 r150,157,148,158 c152,153,147,158 r160,161,155,165 r151,156 r147,151 c151,167,150,170 c166,170,163,173 r167,173 r162,167 r149,158,145,160 c151,152,146,158 c153,154,150,160 r151,163 c148,153,145,155 c155,156,150,160 r137,157 c134,135,131,138 c133,134,130,136 r133,138 c136,141 c143,155 r155,156,145,162 c151,152 r152,153,148,158 r153,155 c154,158 c161,163,158,168 r161,162,158,165 r158,159 r162,168 c209,240,201,257 r224,240 r212,238,210,248 c200,201,193,205 r195,202,192,205 r188,189,185,195 r186,187,182,195 r183,190 r181,187 r182,183,178,188 r180,181,177,185 r174,179 c173,176,170,178 r175,176,171,180 c176,177,172,180 c178,179,175,182 r179,180,176,183 r179,180,176,183 r170,177 c158,163,155,168 r159,165 c160,161,156,165 r153,158,150,161 r148,152,145,155 r142,152,138,153 c144,149,142,151 c151,154,148,157 r154,155,150,158 r150,151,147,155 r147,150,144,152 c148,149,145,152 c152,160,147,161".split(' ');
var cc='',cr='';
C.forEach(function(s,i){var t=s[0],a=s.slice(1).split(',').map(Number),x=84+7*i,xp=x+.5,p='';
var T=a[0],B=a[1],H=a[2]||T-2,L=a[3]||B+3;
p='M'+xp+' '+H+'V'+T+'M'+xp+' '+B+'V'+L;
p+='M'+(xp-2)+' '+T+'h5V'+B+'h-5z';
if(t=='c')cc+=p;else cr+=p;});
$('cc',cc);$('cr',cr);
var A="c503 c503 c503 c505 r495 c500 r492 r495 r500 r503 c500 r503 r503 c503 c500 c497 c503 r503 r507 c503 r475 c490 c492 c487 c492 r505 r498 c497 c505 r510 c513 r505 r505 r505 c507 c510 c510 r513 r513 c510 c510 c502 r478 c490 c503 c507 r510 c505 c503 r505 c510 c510 c505 r505 r495 r503 r503 r463 c440 r442 r460 r333 c295 c357 r388 c435 r428 c445 r453 c450 r418 c423 r440 r428 c453 r435 r422 c412 c423 r400 c383 r420 r392 c375 r365 c363 r395 c390 r420 c428 c428 c408 r432 r445 r450 c430 c447 r462 r452 c452 r445 r425 r425 c433 r447 r418 c417 c397 r428 r420 c400 c432 c440 r453 r453 r458 c445 r462 c462 r472 r458 r463 c458 c445 c453 c470 r475 r465 c480 c475 r483 r463 c475 c472 r480 c477 c480 c483 c465 r478 c475 c477 r468 r435 r447 c455 r452 c442 r455 r438 c445 r456 r456 r435 c435 r450 r445 r443 c442 c456 r472 r465 r448 c450 c465 r468 c460 c453 r442 c455 c465 r465 c458 c453 r455 c463 r470 r473 c473 c463 r472 r485 r478 c423 r422 r420 c435 r462 r462 r477 r470 r482 r485 r480 r480 c470 r478 c475 c475 r480 c468 r462 c453 r472 c477 r475 c472 r462 c475 c477 r478 r473 r477 c480 c477".split(' ');
var vc='',vr='';
A.forEach(function(s,i){var t=s[0],y=Math.round(310+s.slice(1)/3),x=84+7*i;
if(t=='c')vc+='M'+(x-2)+' '+y+'h5V497h-5z';else vr+='M'+(x-1.5)+' '+(y+.5)+'h4V497.5h-4z';});
$('vc',vc);$('vr',vr);
})();
</script>
</body>
</html>
